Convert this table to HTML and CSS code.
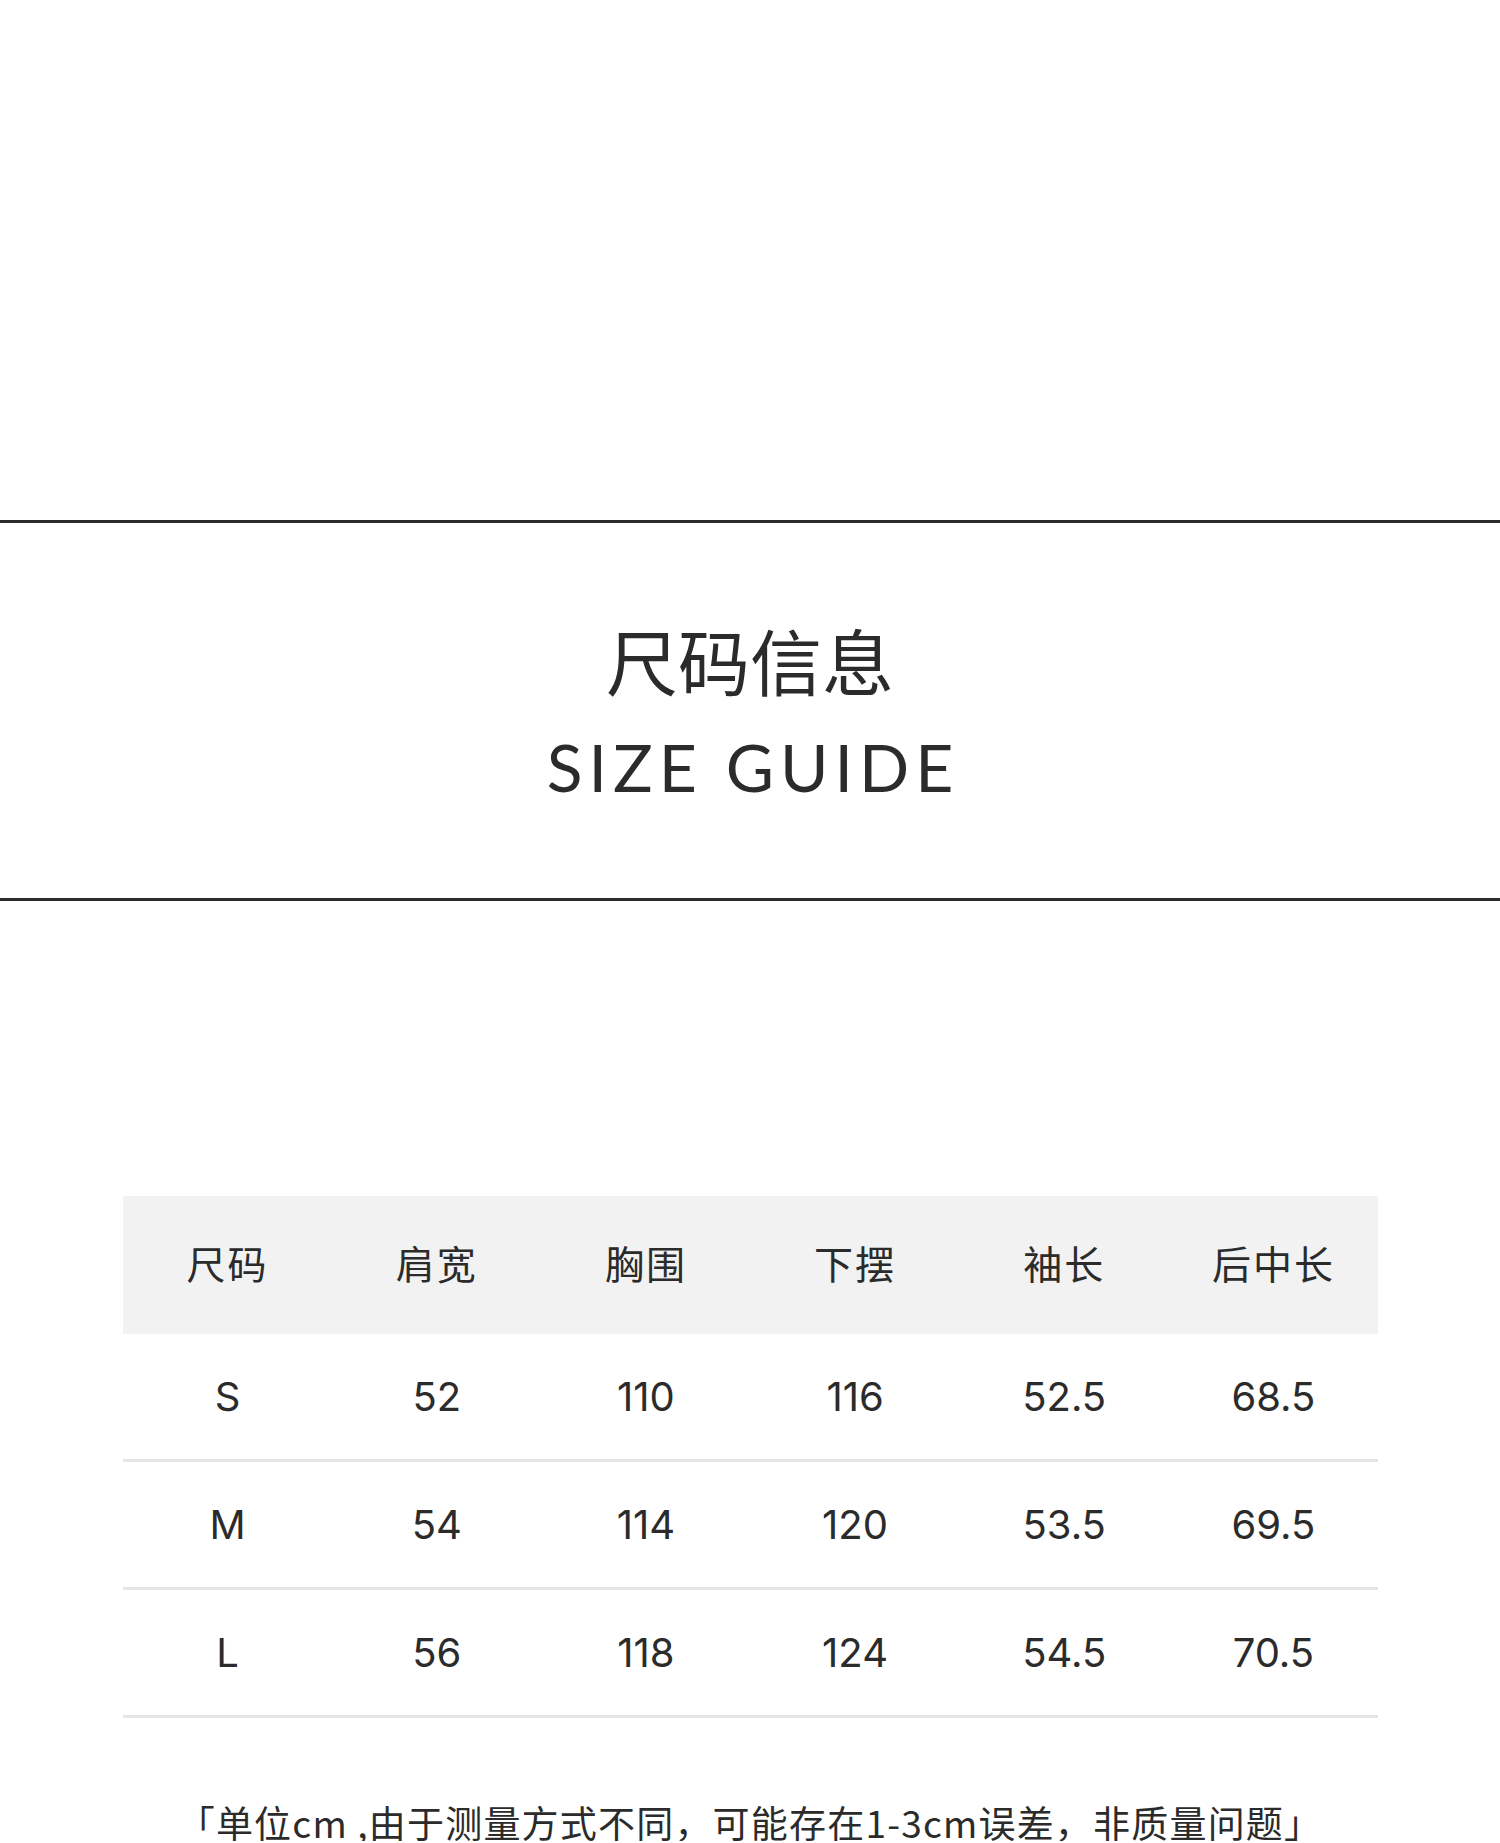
FILE: index.html
```html
<!DOCTYPE html>
<html lang="zh">
<head>
<meta charset="utf-8">
<title>尺码信息 SIZE GUIDE</title>
<link rel="stylesheet" href="styles.css">
</head>
<body>
<div class="page">
  <div class="top-space"></div>
  <section class="heading">
    <h1 class="title-cn">尺码信息</h1>
    <h2 class="title-en">SIZE GUIDE</h2>
  </section>
  <div class="table-wrap">
    <table class="size-table">
      <thead>
        <tr><th>尺码</th><th>肩宽</th><th>胸围</th><th>下摆</th><th>袖长</th><th>后中长</th></tr>
      </thead>
      <tbody>
        <tr><td>S</td><td>52</td><td>110</td><td>116</td><td>52.5</td><td>68.5</td></tr>
        <tr><td>M</td><td>54</td><td>114</td><td>120</td><td>53.5</td><td>69.5</td></tr>
        <tr><td>L</td><td>56</td><td>118</td><td>124</td><td>54.5</td><td>70.5</td></tr>
      </tbody>
    </table>
  </div>
  <p class="note">「单位cm ,由于测量方式不同，可能存在1-3cm误差，非质量问题」</p>
</div>
</body>
</html>
```

FILE: styles.css
```css
html, body {
  margin: 0;
  padding: 0;
  background: #ffffff;
}
body {
  color: #2b2b2b;
  font-family: "Noto Sans CJK SC", "Noto Sans", sans-serif;
}
.page {
  width: 1500px;
  display: flex;
  flex-direction: column;
}
.top-space {
  height: 520px;
}
.heading {
  border-top: 3px solid #2b2b2b;
  border-bottom: 3px solid #2b2b2b;
  height: 375px;
  box-sizing: content-box;
  display: flex;
  flex-direction: column;
  align-items: center;
}
.title-cn {
  margin: 100px 0 0 0;
  font-family: "Noto Sans CJK SC", sans-serif;
  font-weight: 400;
  font-size: 72px;
  line-height: 72px;
}
.title-en {
  margin: 39px 0 0 0;
  font-family: "Lato", "Inter", sans-serif;
  font-weight: 400;
  font-size: 66px;
  line-height: 66px;
  letter-spacing: 6px;
  padding-left: 6px;
}
.table-wrap {
  padding: 295px 122px 0 123px;
}
.size-table {
  width: 100%;
  border-collapse: collapse;
  table-layout: fixed;
}
.size-table th {
  background: #f2f2f2;
  height: 138px;
  padding: 0 0 7px 0;
  box-sizing: border-box;
  font-family: "Noto Sans CJK SC", sans-serif;
  font-weight: 400;
  font-size: 39px;
  letter-spacing: 2px;
  color: #2b2b2b;
  text-align: center;
  vertical-align: middle;
}
.size-table td {
  height: 125px;
  padding: 0;
  border-bottom: 3px solid #e5e5e5;
  font-family: "Inter", "Lato", sans-serif;
  font-weight: 400;
  font-size: 40px;
  color: #2b2b2b;
  text-align: center;
  vertical-align: middle;
}
.note {
  margin: 86px 0 0 0;
  text-align: center;
  font-family: "Noto Sans CJK SC", sans-serif;
  font-size: 37px;
  line-height: 37px;
  letter-spacing: 1.2px;
  color: #2b2b2b;
}
```
